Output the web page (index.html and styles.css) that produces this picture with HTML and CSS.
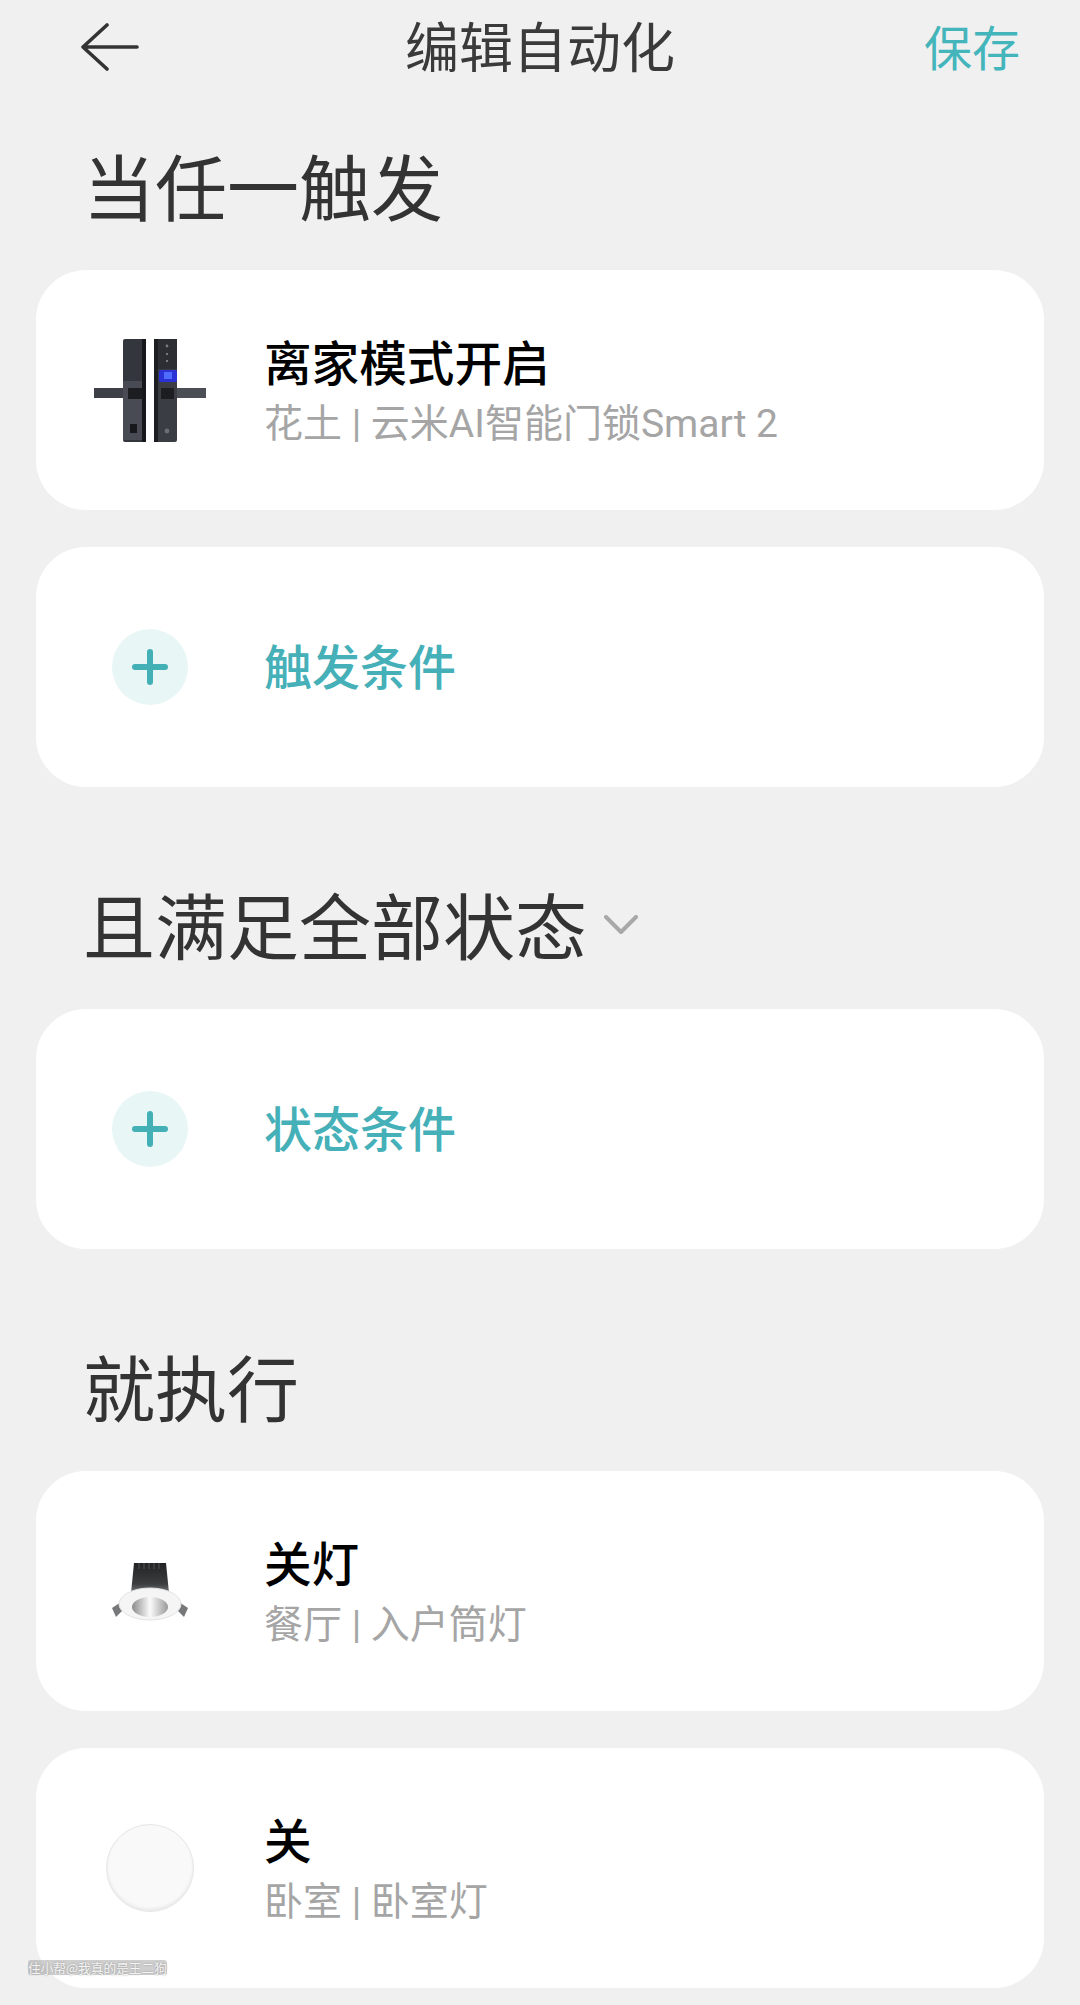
FILE: index.html
```html
<!DOCTYPE html>
<html lang="zh-CN">
<head>
<meta charset="utf-8">
<title>编辑自动化</title>
<link rel="stylesheet" href="styles.css">
</head>
<body>
<div class="page">
  <header class="topbar">
    <svg class="back" viewBox="0 0 58 48" aria-hidden="true"><path d="M26 2 L2 24 L26 46 M2 24 H56"/></svg>
    <h1 class="page-title">编辑自动化</h1>
    <span class="save">保存</span>
  </header>

  <section class="group group-first">
    <h2 class="heading">当任一触发</h2>
    <div class="card">
      <div class="thumb">
        <svg class="lock" viewBox="0 0 112 103" aria-hidden="true">
          <rect x="0" y="49" width="31" height="10" fill="#3d4046"/>
          <rect x="83" y="49" width="29" height="10" fill="#4b4e55"/>
          <rect x="29" y="0" width="23" height="103" rx="2" fill="#33363c"/>
          <rect x="29" y="42" width="19" height="59" fill="#484b53"/>
          <rect x="48" y="0" width="4" height="103" fill="#17181b"/>
          <rect x="60" y="0" width="23" height="103" rx="2" fill="#3a3d44"/>
          <rect x="64" y="0" width="19" height="30" fill="#2c2e33"/>
          <rect x="60" y="0" width="4" height="103" fill="#1d1e22"/>
          <rect x="65" y="31" width="18" height="12" rx="2" fill="#2a31d6"/>
          <rect x="70" y="33" width="8" height="7" fill="#4f6cff"/>
          <rect x="34" y="49" width="14" height="11" fill="#1c1d20"/>
          <rect x="67" y="49" width="13" height="11" fill="#1c1d20"/>
          <rect x="36" y="85" width="7" height="9" fill="#17181b"/>
          <circle cx="73" cy="7" r="1.4" fill="#77797f"/>
          <circle cx="73" cy="15" r="1.1" fill="#8a8c92"/>
          <circle cx="73" cy="22" r="1.1" fill="#8a8c92"/>
          <circle cx="73" cy="92" r="2.4" fill="#6c6e74"/>
        </svg>
      </div>
      <div class="text">
        <div class="name">离家模式开启</div>
        <div class="sub">花土 | 云米AI智能门锁Smart 2</div>
      </div>
    </div>
    <div class="card">
      <div class="thumb"><span class="plus"><svg viewBox="0 0 36 36" aria-hidden="true"><path d="M18 3 V33 M3 18 H33"/></svg></span></div>
      <div class="add">触发条件</div>
    </div>
  </section>

  <section class="group">
    <h2 class="heading">且满足全部状态<svg class="chevron" viewBox="0 0 34 20" aria-hidden="true"><path d="M2 2 L17 17 L32 2"/></svg></h2>
    <div class="card">
      <div class="thumb"><span class="plus"><svg viewBox="0 0 36 36" aria-hidden="true"><path d="M18 3 V33 M3 18 H33"/></svg></span></div>
      <div class="add">状态条件</div>
    </div>
  </section>

  <section class="group">
    <h2 class="heading">就执行</h2>
    <div class="card">
      <div class="thumb">
        <svg class="lamp" viewBox="0 0 76 60" aria-hidden="true">
          <defs>
            <linearGradient id="sink" x1="0" y1="0" x2="0" y2="1"><stop offset="0" stop-color="#222325"/><stop offset=".7" stop-color="#3c3d3f"/><stop offset="1" stop-color="#77787a"/></linearGradient>
            <linearGradient id="bowl" x1="0" y1="0" x2="1" y2="0"><stop offset="0" stop-color="#8a8a8a"/><stop offset=".5" stop-color="#fbfbfb"/><stop offset="1" stop-color="#999"/></linearGradient>
          </defs>
          <path d="M0 47 L9 41 L13 47 L4 56 Z" fill="#77787a"/>
          <path d="M76 47 L67 41 L63 47 L72 56 Z" fill="#77787a"/>
          <path d="M22 2 L54 2 L57 32 L19 32 Z" fill="url(#sink)"/>
          <path d="M27 2 V8 M32 2 V8 M37 2 V8 M42 2 V8 M47 2 V8" stroke="#555" stroke-width="1"/>
          <ellipse cx="38" cy="43" rx="31" ry="16" fill="#f5f5f5" stroke="#e2e2e2"/>
          <ellipse cx="38" cy="46" rx="18" ry="10" fill="url(#bowl)"/>
        </svg>
      </div>
      <div class="text">
        <div class="name">关灯</div>
        <div class="sub">餐厅 | 入户筒灯</div>
      </div>
    </div>
    <div class="card">
      <div class="thumb"><span class="disc"></span></div>
      <div class="text">
        <div class="name">关</div>
        <div class="sub">卧室 | 卧室灯</div>
      </div>
    </div>
  </section>

  <div class="watermark">住小帮@我真的是王二狗</div>
</div>
</body>
</html>
```
FILE: styles.css
```css
* { box-sizing: border-box; }
html, body { margin: 0; padding: 0; }
body {
  background: #f0f0f0;
  font-family: "Noto Sans CJK SC", "Noto Sans", sans-serif;
}
.page {
  position: relative;
  width: 1080px;
  height: 2005px;
  overflow: hidden;
}
.topbar {
  height: 94px;
  padding: 0 60px 4px;
  display: grid;
  grid-template-columns: 1fr auto 1fr;
  align-items: center;
}
.back { width: 58px; height: 48px; display: block; margin: 3px 0 0 21px; }
.back path { fill: none; stroke: #333; stroke-width: 3.6; stroke-linecap: round; stroke-linejoin: round; }
.page-title {
  margin: 0;
  font-size: 54px;
  line-height: 90px;
  font-weight: 400;
  color: #3a3a3a;
}
.save { font-size: 48px; line-height: 90px; color: #43b5bb; text-align: right; }
.group { padding: 49px 36px 0; }
.group-first { padding-top: 40px; }
.heading {
  margin: 0 0 36px;
  padding-left: 47px;
  height: 100px;
  display: flex;
  align-items: center;
  font-size: 72px;
  line-height: 100px;
  font-weight: 400;
  color: #333;
}
.chevron { width: 34px; height: 20px; margin: 4px 0 0 17px; }
.chevron path { fill: none; stroke: #a8a8a8; stroke-width: 4; stroke-linecap: round; stroke-linejoin: round; }
.card {
  height: 240px;
  margin-bottom: 37px;
  background: #fff;
  border-radius: 50px;
  display: flex;
  align-items: center;
}
.thumb {
  width: 229px;
  flex: none;
  display: flex;
  justify-content: center;
  padding-right: 1px;
}
.text { display: flex; flex-direction: column; margin-left: -1px; padding-top: 4px; }
.name { font-size: 47.6px; line-height: 60px; font-weight: 500; color: #000; }
.sub {
  font-family: Roboto, "Noto Sans CJK SC", sans-serif;
  font-size: 39px;
  line-height: 58px;
  margin-top: 4px;
  color: #a5a5a5;
}
.add { font-size: 48px; line-height: 60px; font-weight: 500; color: #45b0b8; padding-bottom: 6px; margin-left: -1px; }
.lock { width: 112px; height: 103px; display: block; filter: blur(.5px); }
.lamp { width: 76px; height: 60px; display: block; filter: blur(.5px); }
.plus {
  width: 76px;
  height: 76px;
  border-radius: 50%;
  background: #e9f6f6;
  display: flex;
  align-items: center;
  justify-content: center;
}
.plus svg { width: 36px; height: 36px; display: block; }
.plus path { fill: none; stroke: #43b0b6; stroke-width: 6; stroke-linecap: round; }
.disc {
  display: block;
  width: 88px;
  height: 88px;
  border-radius: 50%;
  background: #f9f9f9;
  border: 1px solid #e6e6e6;
  box-shadow: inset 0 -2px 3px #e8e8e8;
}
.watermark {
  position: absolute;
  left: 28px;
  top: 1960px;
  font-size: 12.7px;
  line-height: 15px;
  color: #f5f5f5;
  background: rgba(160, 160, 160, .5);
  text-shadow: 0 0 2px #8a8a8a;
  border-radius: 3px;
}
```
